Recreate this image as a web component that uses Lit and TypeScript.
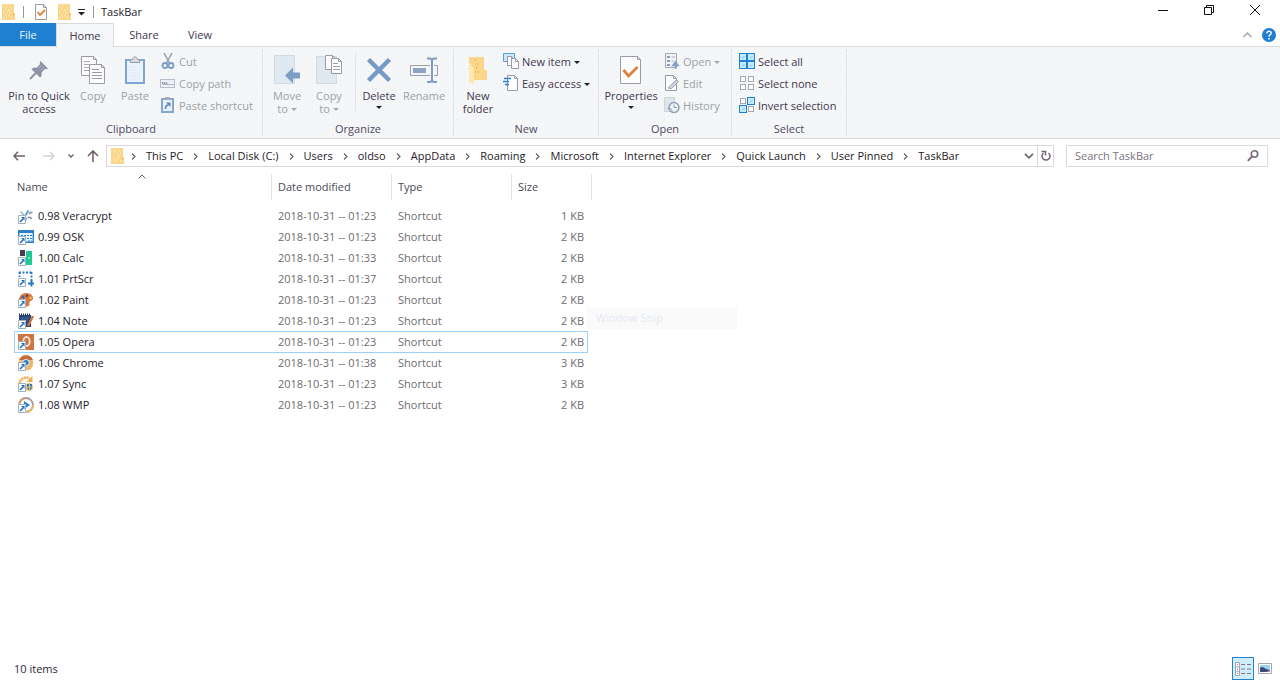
import { LitElement, html, css, svg, nothing, TemplateResult } from "lit";
import { customElement, property, state } from "lit/decorators.js";
import { classMap } from "lit/directives/class-map.js";

type Art = [number, number, unknown];

const page = (x: number, y: number, w: number, h: number, fill = "#fdfdfe") => svg`
  <path d="M${x + 0.5} ${y + 0.5}h${w - 4}l3 3v${h - 4}h${-(w - 1)}z" fill=${fill} stroke="#9a9ba6"/>
  <path d="M${x + w - 3.5} ${y + 0.5}v3h3" fill="none" stroke="#9a9ba6"/>`;

const link = svg`
  <path d="M0 7h8v9H0z" fill="#fff"/>
  <path d="M.5 7.500h7v8h-7z" fill="#fff" stroke="#9fb0bf"/>
  <path d="M2 14l3-3" fill="none" stroke="#1f6fc4" stroke-width="1.600"/>
  <path d="M3 9h3.500v3.500z" fill="#1f6fc4"/>`;

const tile = (x: number, y: number, on: boolean) => on
  ? svg`<rect x=${x + 0.5} y=${y + 0.5} width="7" height="7" fill="#c4ebfb" stroke="#1f7fd0"/><path d="M${x + 3} ${y + 5.5}l2.500-2.500" stroke="#7cc4ee"/>`
  : svg`<rect x=${x + 1.5} y=${y + 1.5} width="5" height="5" fill="#fff" stroke="#a5a6b0"/>`;

const art: Record<string, Art> = {
  folder: [14, 16, svg`<path d="M0 0h12v9h1v7H0z" fill="#fbd58a"/>
    <path d="M2 2h1M5 1h1M8 3h1M3 5h1M6 6h1M2 8h1M5 9h1M8 8h1M3 11h1M6 12h1M2 14h1M9 13h1M9 5h1M4 13h1M7 10h1M4 3h1" stroke="#fffbd0" stroke-width="1"/>
    <path d="M11 10h1v1h-1z" fill="#d98a3c"/>`],
  check: [14, 16, svg`${page(1, 0, 12, 16)}<path d="M3.500 8l2.500 3 5-5" fill="none" stroke="#e08030" stroke-width="1.800"/>`],
  more: [9, 8, svg`<path d="M1 1.500h7" stroke="#222"/><path d="M1 4h7l-3.500 3.500z" fill="#222"/>`],
  min: [10, 10, svg`<path d="M0 5.500h10" stroke="#111"/>`],
  restore: [10, 10, svg`<path d="M.5 2.500h7v7h-7zM2.500 2.500v-2h7v7h-2" fill="none" stroke="#111"/>`],
  close: [10, 10, svg`<path d="M0 0l10 10M10 0L0 10" stroke="#111" fill="none"/>`],
  up: [9, 6, svg`<path d="M.5 5l4-4 4 4" fill="none" stroke="#a3a3a8" stroke-width="1.400"/>`],
  sort: [8, 5, svg`<path d="M.5 4.500L4 1l3.500 3.500" fill="none" stroke="#6c6570"/>`],
  help: [14, 14, svg`<circle cx="7" cy="7" r="7" fill="#1f7dd0"/><path d="M4.800 5.500c0-3.200 4.600-2.800 4.400-.3C9.100 6.600 7 6.700 7 8.700" fill="none" stroke="#fff" stroke-width="1.400"/><path d="M6.200 10h1.600v1.600H6.200z" fill="#fff"/>`],
  pin: [20, 20, svg`<path d="M11.500 1L19 8.500l-2 .8-1-.3-3.200 3.200-.4 4L11 17.600 2.500 9.200 4 7.800l4-.4L11 4l-.3-1.600z" fill="#8e93a6"/><path d="M7 12.800L1 19" stroke="#8e93a6" stroke-width="2"/><path d="M10 8l3-3M12 10l3-3" stroke="#b7afc0"/>`],
  copy: [24, 28, svg`${page(0, 0, 16, 20)}<path d="M3 5.500h6M3 8.500h5M3 11.500h5M3 14.500h5" stroke="#a8a9b4"/>${page(8, 8, 16, 20)}<path d="M11 13.500h7M11 16.500h10M11 19.500h10M11 22.500h10" stroke="#9b9cab"/>`],
  paste: [20, 28, svg`<rect x="1" y="4" width="18" height="23" fill="#eaf2fb" stroke="#7fa6d3" stroke-width="2"/><path d="M4 6h12v1H4z" fill="#dcdde3"/><path d="M5.500 6.500v-3h2c0-3.500 5-3.500 5 0h2v3z" fill="#d9dae0" stroke="#9d9ea9"/><path d="M4 11h12M4 14h12M4 17h12M4 20h12M4 23h12" stroke="#d6e5f5" stroke-dasharray="1 1"/>`],
  cut: [14, 16, svg`<path d="M3 0l5.500 10M11 0L5.500 10" stroke="#9a9cab" stroke-width="1.500"/><circle cx="4" cy="12.500" r="2.500" fill="none" stroke="#7c9fc8" stroke-width="1.800"/><circle cx="10" cy="12.500" r="2.500" fill="none" stroke="#7c9fc8" stroke-width="1.800"/>`],
  path: [16, 16, svg`<rect x=".5" y="4.500" width="14" height="8" fill="#eef1f6" stroke="#b9bcc8"/><path d="M2 7l1.500 3M4 7l1.500 3M6 7l1.500 3M8.500 9.500h1M10.500 9.500h1M12.500 9.500h1" stroke="#6e7f9e"/>`],
  pasteLink: [14, 16, svg`<rect x="1" y="2" width="11" height="13" fill="#e8f2fb" stroke="#86a8d0" stroke-width="2"/><path d="M4 0h5v3H4z" fill="#a9abb6"/><path d="M4.500 12c0-3 1-4 3-4" fill="none" stroke="#5c86b8" stroke-width="1.600"/><path d="M5 5.500h4.500v4.500z" fill="#5c86b8"/>`],
  move: [28, 30, svg`<path d="M1.500.5h20v28h-20z" fill="#dfe9ef" stroke="#d2dade"/><path d="M4 4h14M6 7h14M4 10h14M6 13h12M4 20h8M4 24h14" stroke="#cfe9f5" stroke-dasharray="1 3"/><path d="M12 20.500l8-8v5h7v6h-7v5z" fill="#7d9dc6"/>`],
  copyTo: [28, 30, svg`<path d="M1.500 1.500h20v27h-20z" fill="#dfe9ef" stroke="#d2dade"/><path d="M4 8h6M6 12h6M4 16h8M6 20h12M4 24h14" stroke="#cfe9f5" stroke-dasharray="1 3"/>${page(10, 0, 11, 15)}${page(16, 3, 11, 16)}<path d="M18 8.500h5M18 11.500h7M18 14.500h7" stroke="#9b9cab"/>`],
  del: [26, 26, svg`<path d="M2.500 2.500l21 21M23.500 2.500l-21 21" stroke="#7699c6" stroke-width="4.500"/>`],
  rename: [28, 26, svg`<path d="M20 8.500H.5v10H20M24 8.500h3.500v10H24" fill="none" stroke="#9d9fac"/><path d="M3 11h13v5H3z" fill="#8fa3c2"/><path d="M17 1.500h3.500l1.500 1.500 1.500-1.500H27M22 2.500v21M17 25h3.500l1.500-1.500 1.500 1.500H27" fill="none" stroke="#7f9cc4" stroke-width="2"/>`],
  newFolder: [20, 28, svg`<path d="M1 1h15v13h3v10H6l-4 3-1-2z" fill="#fbd58a"/><path d="M1 6v19l5 3V13z" fill="#fde7a8"/><path d="M2 8v18M4 11v14" stroke="#fff6c8" stroke-dasharray="1 2"/><path d="M7 4h1M9 8h1M8 12h1M10 16h1M7 16h1" stroke="#d98f3e"/>`],
  newItem: [16, 16, svg`<path d="M.5.500h11v8H.500z" fill="#c9e9f8" stroke="#5a9fd6"/>${page(4, 3, 8, 10)}${page(8, 5, 8, 11)}`],
  easy: [16, 16, svg`${page(4, 0, 11, 16)}<path d="M1 3.500h7M0 6.500h6M2 9.500h4" stroke="#2c7fd0" stroke-width="1.400"/>`],
  props: [22, 28, svg`${page(0, 0, 21, 28)}<path d="M3.500 14l5 6 9-9" fill="none" stroke="#dd8140" stroke-width="2.800"/>`],
  open: [16, 16, svg`<path d="M1.500.5h11v14h-11z" fill="#f2f3f6" stroke="#a7a9b4"/><path d="M3 3h3v2H3zM3 7h3v2H3zM3 11h3v2H3z" fill="#8d9db5"/><path d="M7.500 4h4M7.500 8h3" stroke="#b3b5c0"/><path d="M11.500 16v-5M8.800 12.500L11.500 9l2.700 3.500z" fill="#7f9fc6" stroke="#7f9fc6" stroke-width="1.500"/>`],
  edit: [16, 16, svg`${page(1, 0, 12, 16)}<path d="M4 13l8-8 2.500 1.500-7 7z" fill="#cfd3dc" stroke="#9ba3b4"/>`],
  history: [16, 16, svg`<path d="M.5.5h10v14H.5z" fill="#dde6ec" stroke="#ccd5da"/><circle cx="10" cy="10.500" r="5" fill="#eef2f7" stroke="#8f9db5" stroke-width="1.400"/><path d="M10 7.500v3h3M3.500 11.500h3l2 2" fill="none" stroke="#8f9db5"/>`],
  all: [16, 16, svg`${tile(0, 0, true)}${tile(8, 0, true)}${tile(0, 8, true)}${tile(8, 8, true)}`],
  none: [16, 16, svg`${tile(0, 0, false)}${tile(8, 0, false)}${tile(0, 8, false)}${tile(8, 8, false)}`],
  invert: [16, 16, svg`${tile(0, 0, false)}${tile(8, 0, true)}${tile(0, 8, true)}${tile(8, 8, false)}`],
  back: [12, 10, svg`<path d="M12 5H1M5 .8L1 5l4 4.200" fill="none" stroke="#6f5f6c" stroke-width="1.600"/>`],
  forward: [12, 10, svg`<path d="M0 5h11M7 .8L11 5 7 9.200" fill="none" stroke="#d4d4d8" stroke-width="1.400"/>`],
  recent: [6, 4, svg`<path d="M.5.500L3 3 5.500.500" fill="none" stroke="#6f5f6c" stroke-width="1.400"/>`],
  parent: [12, 12, svg`<path d="M6 12V1M1 6l5-5 5 5" fill="none" stroke="#6f5f6c" stroke-width="1.600"/>`],
  crumb: [5, 7, svg`<path d="M1 .5l3 3-3 3" fill="none" stroke="#6f5f6c" stroke-width="1.200"/>`],
  down: [10, 6, svg`<path d="M1 .8l4 4 4-4" fill="none" stroke="#6f6670" stroke-width="1.700"/>`],
  refresh: [10, 12, svg`<path d="M2.500 3A4 4 0 1 0 7.500 3" fill="none" stroke="#6f6670" stroke-width="1.500"/><path d="M.5 1.500h4v4" fill="none" stroke="#6f6670" stroke-width="1.500"/>`],
  search: [12, 12, svg`<circle cx="7.500" cy="4" r="3.200" fill="none" stroke="#7c6878" stroke-width="1.600"/><path d="M5 6.500L.8 10.800" stroke="#7c6878" stroke-width="1.800"/>`],
  details: [16, 14, svg`<path d="M.5.500h4v13h-4zM.5 4.800h4M.5 9.200h4" fill="#fff" stroke="#a8a5b0"/><path d="M2 2h1v1H2zM2 11h1v1H2z" fill="#d8703c"/><path d="M2 6.500h1v1H2z" fill="#2a7fc8"/><path d="M6 2.500h4M12 2.500h4M6 7h4M12 7h4M6 11.500h4M12 11.500h4" stroke="#8b6f8a"/>`],
  thumbs: [14, 12, svg`<path d="M.5.500h13v10H.500z" fill="#fff" stroke="#a8a5b0"/><path d="M2 2h10v7H2z" fill="#9dd4f2"/><path d="M2 4.500l3-.5 3 2 4 1v2H2z" fill="#3b4a7a"/><path d="M8 9l4-2v2z" fill="#9a8fb0"/>`],
  veracrypt: [16, 16, svg`<path d="M2.500 3.500l5 5.500" stroke="#b5b8c0" stroke-width="1.800"/><path d="M10.500 2.500L6.500 9l2 3" fill="none" stroke="#5fa3d4" stroke-width="2"/><path d="M14.500 4.500h-2l-1.500 1.500M9.500 9.500h3l1 1.500" fill="none" stroke="#8b8d96" stroke-width="1.600"/>${link}`],
  osk: [16, 16, svg`<path d="M.7 1.700h14.600v11.600H.700z" fill="#e4f3fb" stroke="#2a80cf" stroke-width="1.400"/><path d="M1 3h14" stroke="#2a80cf" stroke-width="2"/><path d="M3 6.500h11M3 9.500h11M10 12h4" stroke="#2a80cf" stroke-dasharray="2 1"/>${link}`],
  calc: [16, 16, svg`<path d="M2 0h5v6H2z" fill="#4b3a57"/><path d="M8 1h6v14H8z" fill="#1fc992"/><path d="M10 8h2" stroke="#dff"/>${link}`],
  prtscr: [16, 16, svg`<path d="M1 1.500h13M13.500 1v10M1.500 1v5" stroke="#2077c8" stroke-width="1.800" stroke-dasharray="2 1.500" fill="none"/><path d="M13.500 9v6.500M10 12.500h6" stroke="#2077c8" stroke-width="1.800"/>${link}`],
  paint: [16, 16, svg`<path d="M8 1c5 0 7.500 3 7 6-.5 2-3 1.500-3.500 3-.5 2 1 3-1 4C5 16 1 12 1 8s3-7 7-7z" fill="#d8783c"/><circle cx="5" cy="5" r="1.500" fill="#2a6fb8"/><circle cx="9" cy="3.800" r="1.300" fill="#5b3c5c"/><circle cx="12.500" cy="6" r="1.200" fill="#f5c26a"/>${link}`],
  note: [16, 16, svg`<path d="M1 2h12v12H1z" fill="#2a4577"/><path d="M1 1.500h12" stroke="#173058" stroke-dasharray="1 1" stroke-width="2"/><path d="M3 5h8M3 7h7" stroke="#3f6ca5"/><path d="M15 3l-5 10" stroke="#d9743a" stroke-width="2.400"/>${link}`],
  opera: [16, 16, svg`<path d="M0 0h16v16H0z" fill="#cf7442"/><ellipse cx="8.500" cy="7.500" rx="3.200" ry="4.500" fill="none" stroke="#fbe6d3" stroke-width="1.800"/>${link}`],
  chrome: [16, 16, svg`<circle cx="8" cy="8" r="7.500" fill="#f3bf72"/><path d="M1 5a7.500 7.500 0 0 1 14 0H8z" fill="#c66a3a"/><path d="M10 14l3-8M12 14l2-7" stroke="#e08f44" stroke-dasharray="1 1.500"/><circle cx="8" cy="7.500" r="3.500" fill="#cfe6f8"/><circle cx="8" cy="7.500" r="2.600" fill="#2a7fd0"/>${link}`],
  sync: [16, 16, svg`<path d="M1.500 8a6.500 6.500 0 0 1 11-4.500" fill="none" stroke="#f0b05c" stroke-width="2.800" stroke-dasharray="2 .6"/><path d="M14.500 0v6h-6z" fill="#efab50"/><circle cx="11" cy="11" r="4" fill="#f3c27a"/><path d="M9 8h5v4l-2.500 3L9 12z" fill="#2e77c0"/><path d="M11.500 8v6.500M9 11h5" stroke="#f5c456"/>${link}`],
  wmp: [16, 16, svg`<circle cx="8" cy="8" r="7" fill="#f8fbfe" stroke="#a898a6" stroke-width="1.800"/><path d="M1.500 6a7 7 0 0 1 4-4.500" fill="none" stroke="#e59a4a" stroke-width="1.800"/><path d="M15 8a7 7 0 0 1-7 7" fill="none" stroke="#edb35e" stroke-width="1.800"/><path d="M6 4l6 4-6 4z" fill="#2a80d4"/>${link}`],
};

const icon = (name: string): TemplateResult => {
  const [w, h, body] = art[name];
  return html`<svg width=${w} height=${h} viewBox="0 0 ${w} ${h}" aria-hidden="true">${body}</svg>`;
};

const base = css`
  * { box-sizing: border-box; }
  svg { display: block; flex: none; }
  button {
    margin: 0; padding: 0; border: 0; background: none;
    font: inherit; color: inherit;
  }
`;

@customElement("ribbon-button")
class RibbonButton extends LitElement {
  @property() label = "";
  @property() icon = "";
  @property({ type: Boolean, reflect: true }) small = false;
  @property({ type: Boolean, reflect: true }) off = false;
  @property({ type: Boolean, reflect: true }) menu = false;

  static styles = [base, css`
    :host { display: block; flex: none; width: 42px; }
    :host([small]) { width: auto; }
    button {
      display: flex; flex-direction: column; align-items: center;
      width: 100%; line-height: 13px; white-space: pre-line; color: #42384e;
    }
    .art { display: flex; align-items: center; justify-content: center; height: 39px; }
    .caret {
      display: inline-block; border: 3px solid transparent;
      border-top-color: #222; border-bottom: 0;
    }
    .block { margin-top: 4px; }
    .inline { margin-left: 3px; vertical-align: 2px; }
    :host([off]) button { color: #98a3a6; }
    :host([off]) .caret { border-top-color: #a4a8ae; }
    :host([small]) button { flex-direction: row; gap: 3px; height: 22px; white-space: nowrap; }
    :host([small]) .art { width: 16px; height: 16px; }
  `];

  render() {
    const twoLine = this.label.includes("\n");
    const below = this.menu && !this.small && !twoLine;
    return html`<button type="button" ?disabled=${this.off}>
      <span class="art">${icon(this.icon)}</span>
      <span>${this.label}${this.menu && !below ? html`<i class="caret inline"></i>` : nothing}</span>
      ${below ? html`<i class="caret block"></i>` : nothing}
    </button>`;
  }
}

@customElement("ribbon-bar")
class RibbonBar extends LitElement {
  static styles = [base, css`
    :host {
      display: flex; height: 93px;
      border-top: 1px solid #dadbdc; border-bottom: 1px solid #d6d8da;
      background-color: #f5f6f8;
      background-image:
        conic-gradient(from 270deg at 1px 1px, #e8ebef 90deg, transparent 0),
        conic-gradient(from 270deg at 1px 1px, #e8ebef 90deg, transparent 0);
      background-size: 8px 6px;
      background-position: 0 0, 4px 3px;
    }
    section {
      display: flex; flex-direction: column; flex: none;
      margin: 2px 0; border-right: 1px solid #dfe4ea;
    }
    .tools { display: flex; flex: 1; padding: 1px 3px 0; }
    .clipboard .tools { padding-left: 6px; }
    .stack { padding-left: 4px; }
    h2 { margin: 0; font: inherit; line-height: 14px; text-align: center; color: #52485e; }
    .rule { width: 1px; height: 58px; margin: 3px 2px 0 5px; background: #dfe4ea; }
    .clipboard { width: 263px; }
    .organize { width: 191px; }
    .new { width: 145px; }
    .open { width: 133px; }
    .select { width: 115px; }
    .pin { width: 66px; }
    .wide { width: 58px; }
    .rename { width: 48px; }
  `];

  render() {
    return html`
      <section class="clipboard">
        <div class="tools">
          <ribbon-button class="pin" icon="pin" .label=${"Pin to Quick\naccess"}></ribbon-button>
          <ribbon-button off icon="copy" label="Copy"></ribbon-button>
          <ribbon-button off icon="paste" label="Paste"></ribbon-button>
          <div class="stack">
            <ribbon-button small off icon="cut" label="Cut"></ribbon-button>
            <ribbon-button small off icon="path" label="Copy path"></ribbon-button>
            <ribbon-button small off icon="pasteLink" label="Paste shortcut"></ribbon-button>
          </div>
        </div>
        <h2>Clipboard</h2>
      </section>
      <section class="organize">
        <div class="tools">
          <ribbon-button off menu icon="move" .label=${"Move\nto"}></ribbon-button>
          <ribbon-button off menu icon="copyTo" .label=${"Copy\nto"}></ribbon-button>
          <span class="rule"></span>
          <ribbon-button menu icon="del" label="Delete"></ribbon-button>
          <ribbon-button class="rename" off icon="rename" label="Rename"></ribbon-button>
        </div>
        <h2>Organize</h2>
      </section>
      <section class="new">
        <div class="tools">
          <ribbon-button icon="newFolder" .label=${"New\nfolder"}></ribbon-button>
          <div class="stack">
            <ribbon-button small menu icon="newItem" label="New item"></ribbon-button>
            <ribbon-button small menu icon="easy" label="Easy access"></ribbon-button>
          </div>
        </div>
        <h2>New</h2>
      </section>
      <section class="open">
        <div class="tools">
          <ribbon-button class="wide" menu icon="props" label="Properties"></ribbon-button>
          <div class="stack">
            <ribbon-button small off menu icon="open" label="Open"></ribbon-button>
            <ribbon-button small off icon="edit" label="Edit"></ribbon-button>
            <ribbon-button small off icon="history" label="History"></ribbon-button>
          </div>
        </div>
        <h2>Open</h2>
      </section>
      <section class="select">
        <div class="tools">
          <div class="stack">
            <ribbon-button small icon="all" label="Select all"></ribbon-button>
            <ribbon-button small icon="none" label="Select none"></ribbon-button>
            <ribbon-button small icon="invert" label="Invert selection"></ribbon-button>
          </div>
        </div>
        <h2>Select</h2>
      </section>`;
  }
}

interface Entry { icon: string; name: string; time: string; size: string; }

const entries: Entry[] = [
  { icon: "veracrypt", name: "0.98 Veracrypt", time: "01:23", size: "1 KB" },
  { icon: "osk", name: "0.99 OSK", time: "01:23", size: "2 KB" },
  { icon: "calc", name: "1.00 Calc", time: "01:33", size: "2 KB" },
  { icon: "prtscr", name: "1.01 PrtScr", time: "01:37", size: "2 KB" },
  { icon: "paint", name: "1.02 Paint", time: "01:23", size: "2 KB" },
  { icon: "note", name: "1.04 Note", time: "01:23", size: "2 KB" },
  { icon: "opera", name: "1.05 Opera", time: "01:23", size: "2 KB" },
  { icon: "chrome", name: "1.06 Chrome", time: "01:38", size: "3 KB" },
  { icon: "sync", name: "1.07 Sync", time: "01:23", size: "3 KB" },
  { icon: "wmp", name: "1.08 WMP", time: "01:23", size: "2 KB" },
];

@customElement("file-list")
class FileList extends LitElement {
  @state() private focused = 6;

  static styles = [base, css`
    :host { display: block; position: relative; padding: 1px 0 0 14px; }
    table { width: 578px; table-layout: fixed; border-collapse: collapse; }
    .name { width: 258px; }
    .col { width: 120px; }
    th { padding: 0 0 5px; font-weight: normal; text-align: left; color: #4a4856; position: relative; }
    .head { display: block; height: 26px; padding-left: 6px; line-height: 26px; border-right: 1px solid #e2e4ea; }
    .first .head { padding-left: 3px; }
    .sort { position: absolute; top: 0; left: 124px; }
    tbody tr { position: relative; }
    td { height: 21px; padding: 0 0 0 6px; color: #6f6b70; }
    td:first-child { padding-left: 4px; color: #1e1a28; }
    td:last-child { padding: 0 8px 0 0; text-align: right; }
    .file { display: flex; align-items: center; gap: 4px; }
    .focused .file::after {
      content: ""; position: absolute; inset: 0 4px -1px 0;
      border: 1px solid #99d1ff; pointer-events: none;
    }
    .tip {
      position: absolute; left: 587px; top: 134px; width: 150px;
      padding-left: 9px; line-height: 22px; background: #fafafb; color: #e3e9f3;
    }
  `];

  render() {
    return html`
      <table>
        <thead>
          <tr>
            <th class="name first"><span class="sort">${icon("sort")}</span><span class="head">Name</span></th>
            <th class="col"><span class="head">Date modified</span></th>
            <th class="col"><span class="head">Type</span></th>
            <th><span class="head">Size</span></th>
          </tr>
        </thead>
        <tbody>
          ${entries.map((e, i) => html`
            <tr class=${classMap({ focused: i === this.focused })} @click=${() => { this.focused = i; }}>
              <td><span class="file">${icon(e.icon)}${e.name}</span></td>
              <td>2018-10-31 -- ${e.time}</td>
              <td>Shortcut</td>
              <td>${e.size}</td>
            </tr>`)}
        </tbody>
      </table>
      <span class="tip">Window Snip</span>`;
  }
}

const crumbs = ["This PC", "Local Disk (C:)", "Users", "oldso", "AppData", "Roaming", "Microsoft",
  "Internet Explorer", "Quick Launch", "User Pinned", "TaskBar"];

@customElement("app-root")
class AppRoot extends LitElement {
  static styles = [base, css`
    :host {
      display: flex; flex-direction: column; min-height: 100vh;
      background: #fff; color: #1e1a28;
      font: 11px/16px "Open Sans", "Noto Sans", sans-serif;
    }
    .title { display: flex; align-items: center; height: 23px; padding-left: 2px; }
    .bar { width: 1px; height: 12px; background: #9a98a0; }
    .quick { display: flex; align-items: center; gap: 10px; padding: 0 7px; }
    .quick .more { margin-left: -5px; }
    h1 { flex: 1; margin: 0; padding-left: 7px; font: inherit; }
    .controls { display: flex; align-self: stretch; padding-right: 2px; }
    .controls button { display: grid; place-items: center; width: 46px; padding-bottom: 3px; }
    .tabs { display: flex; height: 23px; align-items: stretch; line-height: 24px; color: #42384e; }
    .tabs .tab { width: 56px; }
    .tabs .file { background: #1f7fd0; color: #eaf4fd; }
    .tabs .home {
      width: 58px; height: 24px; margin: 0 2px -1px 0; z-index: 1; line-height: 22px;
      background: #f5f6f8; border: 1px solid #dadbdc; border-width: 1px 1px 0;
    }
    .aside { display: flex; flex: 1; align-items: center; justify-content: flex-end; gap: 10px; padding-right: 4px; }
    .nav { display: flex; align-items: center; height: 34px; padding: 0 12px 0 13px; }
    .arrows { display: flex; align-items: center; gap: 13px; padding-right: 7px; }
    .arrows .fwd { margin-left: 5px; }
    .address {
      display: flex; flex: 1; align-items: center; height: 22px;
      border: 1px solid #d9d9d9; padding-left: 4px;
    }
    ol { display: flex; flex: 1; gap: 10px; margin: 0; padding: 0 0 0 6px; list-style: none; }
    li { display: flex; align-items: center; gap: 10px; white-space: nowrap; }
    a { color: inherit; text-decoration: none; }
    .address button { display: grid; place-items: center; width: 16px; height: 20px; }
    .address .refresh { border-left: 1px solid #d9d9d9; }
    .search {
      display: flex; align-items: center; width: 202px; height: 22px;
      margin-left: 12px; padding: 0 8px; border: 1px solid #d9d9d9;
    }
    input { flex: 1; min-width: 0; padding: 0; border: 0; outline: 0; background: none; font: inherit; color: inherit; }
    input::placeholder { color: #7c7280; opacity: 1; }
    file-list { flex: 1; }
    footer { display: flex; align-items: flex-end; padding: 0 4px 0 14px; color: #2c2636; }
    footer span { flex: 1; line-height: 22px; }
    footer button { display: grid; place-items: center; width: 22px; height: 23px; }
    footer .on { background: #cdeffb; border: 1px solid #2a80cf; }
  `];

  render() {
    return html`
      <header class="title">
        ${icon("folder")}
        <div class="quick">
          <span class="bar"></span>
          <button type="button" aria-label="Properties">${icon("check")}</button>
          <button type="button" aria-label="New folder">${icon("folder")}</button>
          <button type="button" class="more" aria-label="Customize toolbar">${icon("more")}</button>
        </div>
        <span class="bar"></span>
        <h1>TaskBar</h1>
        <div class="controls">
          <button type="button" aria-label="Minimize">${icon("min")}</button>
          <button type="button" aria-label="Restore">${icon("restore")}</button>
          <button type="button" aria-label="Close">${icon("close")}</button>
        </div>
      </header>
      <div class="tabs">
        <button type="button" class="tab file">File</button>
        <button type="button" class="tab home">Home</button>
        <button type="button" class="tab">Share</button>
        <button type="button" class="tab">View</button>
        <div class="aside">
          <button type="button" aria-label="Collapse ribbon">${icon("up")}</button>
          <button type="button" aria-label="Help">${icon("help")}</button>
        </div>
      </div>
      <ribbon-bar></ribbon-bar>
      <div class="nav">
        <div class="arrows">
          <button type="button" aria-label="Back">${icon("back")}</button>
          <button type="button" class="fwd" aria-label="Forward" disabled>${icon("forward")}</button>
          <button type="button" aria-label="Recent locations">${icon("recent")}</button>
          <button type="button" aria-label="Up">${icon("parent")}</button>
        </div>
        <nav class="address" aria-label="Address">
          ${icon("folder")}
          <ol>${crumbs.map((c) => html`<li>${icon("crumb")}<a href="#">${c}</a></li>`)}</ol>
          <button type="button" aria-label="Previous locations">${icon("down")}</button>
          <button type="button" class="refresh" aria-label="Refresh">${icon("refresh")}</button>
        </nav>
        <label class="search">
          <input type="text" placeholder="Search TaskBar" aria-label="Search TaskBar">
          ${icon("search")}
        </label>
      </div>
      <file-list></file-list>
      <footer>
        <span>10 items</span>
        <button type="button" class="on" aria-label="Details view">${icon("details")}</button>
        <button type="button" aria-label="Thumbnail view">${icon("thumbs")}</button>
      </footer>`;
  }
}
